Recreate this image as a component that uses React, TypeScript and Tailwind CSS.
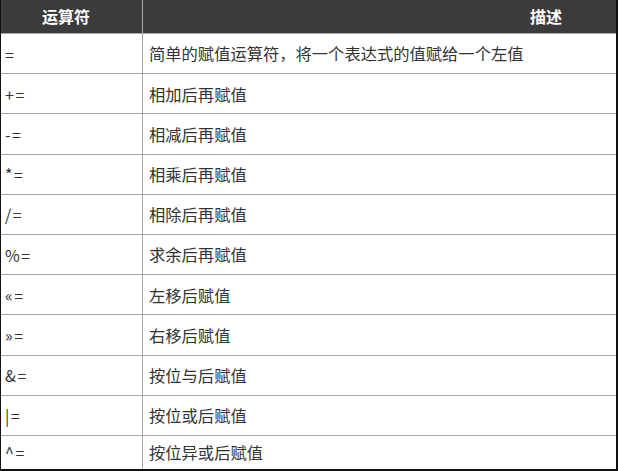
import React from "react";

const rows: [string, string][] = [
  ["=", "简单的赋值运算符，将一个表达式的值赋给一个左值"],
  ["+=", "相加后再赋值"],
  ["-=", "相减后再赋值"],
  ["*=", "相乘后再赋值"],
  ["/=", "相除后再赋值"],
  ["%=", "求余后再赋值"],
  ["«=", "左移后赋值"],
  ["»=", "右移后赋值"],
  ["&=", "按位与后赋值"],
  ["|=", "按位或后赋值"],
  ["^=", "按位异或后赋值"],
];

export default function App() {
  return (
    <div
      className="w-[618px] h-[471px] bg-white flex flex-col border-l border-r-2 border-b-2 border-[#111] overflow-hidden"
      style={{ fontFamily: '"Noto Sans CJK SC", "Noto Sans", sans-serif' }}
    >
      <div className="flex h-[34px] shrink-0 bg-[#3b3b3b] border-b border-[#a8a8a8]">
        <div className="w-[142px] shrink-0 border-r border-[#a8a8a8] flex items-center pl-[41px] pb-[2px] text-white font-bold text-[16px]">
          运算符
        </div>
        <div className="flex-1 flex items-center justify-end pr-[54px] pb-[2px] text-white font-bold text-[16px]">
          描述
        </div>
      </div>
      {rows.map(([op, desc], i) => (
        <div
          key={i}
          className={
            i === rows.length - 1
              ? "flex flex-1 min-h-0"
              : "flex h-[40.2px] shrink-0 border-b border-[#a8a8a8]"
          }
        >
          <div className="w-[142px] shrink-0 border-r border-[#a8a8a8] flex items-center pl-[4px] text-[16px] tracking-[1.5px] text-[#333]">
            {op}
          </div>
          <div className="flex-1 flex items-center pl-[6px] text-[16.3px] text-[#333]">
            {desc}
          </div>
        </div>
      ))}
    </div>
  );
}
